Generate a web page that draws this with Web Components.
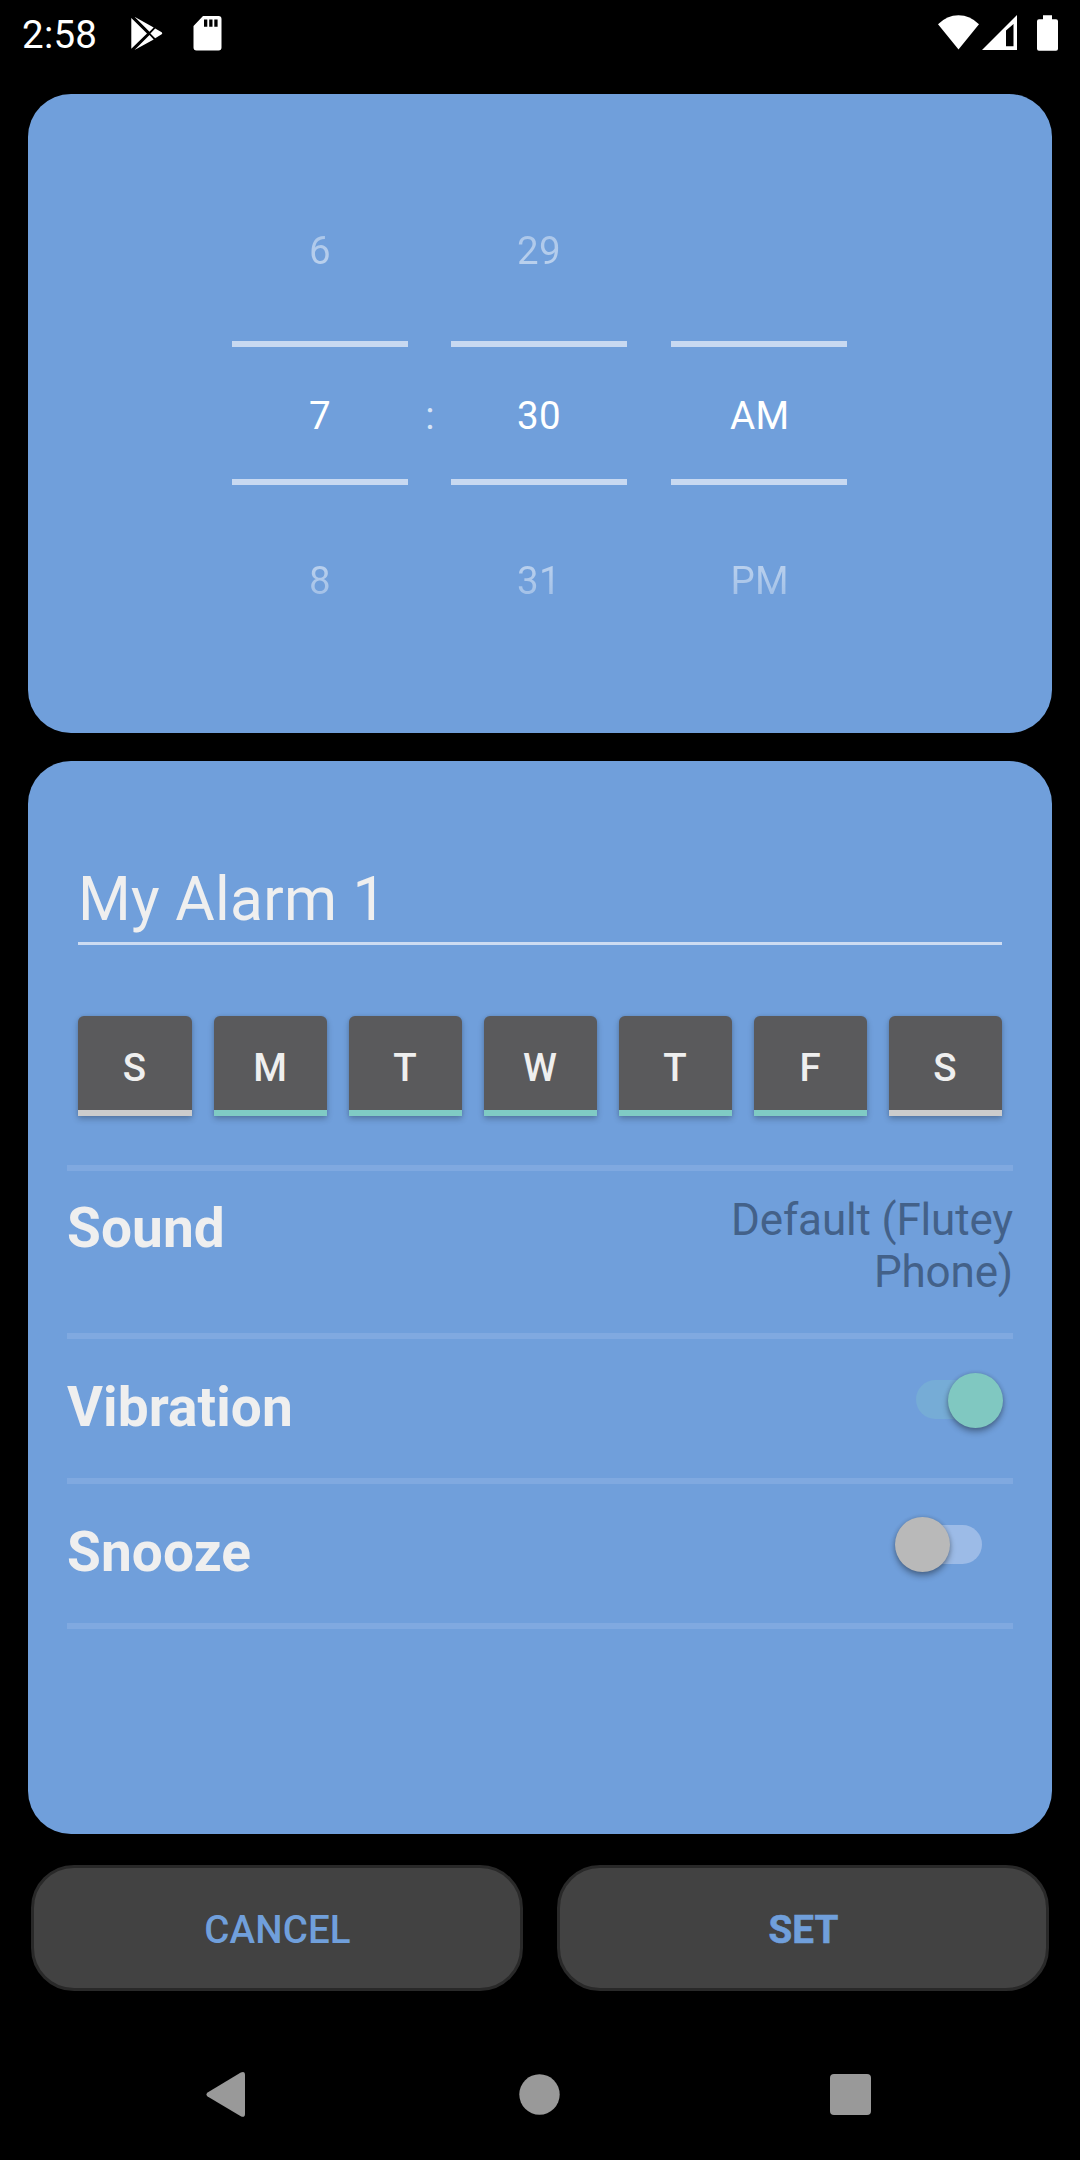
<!DOCTYPE html>
<html lang="en">
<head>
<meta charset="utf-8">
<title>Edit alarm</title>
<style>
html,body{margin:0;background:#000}
body{font-family:Roboto,"Liberation Sans",sans-serif}
</style>
</head>
<body>
<alarm-screen></alarm-screen>
<script>
function define(name, html, setup) {
  const tpl = document.createElement('template');
  tpl.innerHTML = html;
  customElements.define(name, class extends HTMLElement {
    connectedCallback() {
      if (this.shadowRoot) return;
      this.attachShadow({ mode: 'open' }).appendChild(tpl.content.cloneNode(true));
      if (setup) setup(this, this.shadowRoot);
    }
  });
}

define('status-bar', `
<style>
:host{display:flex;box-sizing:border-box;height:66px;padding:15px 22px 0 22px;align-items:flex-start;color:#fff}
.time{font-size:38.5px;line-height:39px;height:39px;width:109px;letter-spacing:.25px}
svg{display:block;flex:none}
.sd{margin-left:30px}
.wifi{margin-left:auto}
.sig{margin-left:3px}
.bat{margin-left:20px}
</style>
<span class="time"><slot></slot></span>
<svg width="32" height="36" viewBox="131 15 32 36" fill="#fff"><path d="M131.3 18v30.8L147 33.4zM134.5 16.7l15 15 4.2-4.3zM134.5 50l15-14.9 4.2 4.3zM155.2 28.5l6.5 3.8q1.2 1 0 2l-6.5 4-4.8-4.9z"/></svg>
<svg class="sd" width="29" height="36" viewBox="193 15 29 36" fill="#fff"><path fill-rule="evenodd" d="M203 16h15.5q3 0 3 3v28.5q0 3-3 3h-22q-3 0-3-3V26zM204 19.5v7.2h3.3v-7.2zM209.2 19.5v7.2h3.3v-7.2zM214.3 19.5v7.2h3.3v-7.2z"/></svg>
<svg class="wifi" width="41" height="36" viewBox="938 15 41 36" fill="#fff"><path d="M938 24.3Q947 15.3 958.500 15.300T979 24.300L958.500 49.500z"/></svg>
<svg class="sig" width="35" height="36" viewBox="982 15 35 36" fill="#fff"><path fill-rule="evenodd" d="M982 50L1017 15V50zM1006 30.500V46.300H1013.500V24z"/></svg>
<svg class="bat" width="21" height="36" viewBox="1037 15 21 36" fill="#fff"><path d="M1043 15.300h9v4h4q2 0 2 2v27.500q0 2-2 2h-17q-2 0-2-2v-27.500q0-2 2-2h4z"/></svg>`);

define('alarm-card', `
<style>
:host{display:flex;flex-direction:column;box-sizing:border-box;margin:0 28px;border-radius:43px;background:#709fdb}
</style><slot></slot>`);

define('picker-wheel', `
<style>
:host{display:flex;flex-direction:column;width:176px;text-align:center;font-size:38.5px;letter-spacing:.3px;color:#fff}
div{display:flex;align-items:center;justify-content:center;box-sizing:border-box;padding-left:var(--nudge,0)}
.prev,.next{padding-bottom:1px;color:transparent;-webkit-background-clip:text;background-clip:text}
.prev{height:180px;background-image:linear-gradient(#fff3,#fff6 38%,#fff8 60%,#fffa)}
.cur{height:132px;padding-top:5px}
.next{height:192px;background-image:linear-gradient(#fffa,#fff8 40%,#fff5 60%,#fff3)}
hr{border:0;margin:0;height:6px;background:#c8d9f1}
</style>
<div class="prev"></div><hr><div class="cur"></div><hr><div class="next"></div>`,
(el, root) => {
  for (const k of ['prev', 'cur', 'next']) root.querySelector('.' + k).textContent = el.getAttribute(k) || '';
});

define('time-picker', `
<style>
:host{display:flex;justify-content:flex-start;padding:67px 0 0 204px}
.colon{width:43px;box-sizing:border-box;padding:232px 0 0 1px;line-height:45px;text-align:center;font-size:38.5px;color:#d6e3f5}
.gap{width:44px}
.half{--nudge:1.5px}
</style>
<picker-wheel prev="6" cur="7" next="8"></picker-wheel>
<span class="colon">:</span>
<picker-wheel prev="29" cur="30" next="31"></picker-wheel>
<span class="gap"></span>
<picker-wheel class="half" cur="AM" next="PM"></picker-wheel>`);

define('name-field', `
<style>
:host{display:block;margin:103px 50px 0;box-sizing:border-box;height:81px;border-bottom:3px solid #cddcf2;font-size:60.500px;letter-spacing:.28px;line-height:71px;color:#efefef}
</style><slot></slot>`);

define('day-toggle', `
<style>
:host{display:flex;box-sizing:border-box;height:100px;border-bottom:6px solid #ccc;justify-content:center;align-items:center;padding:9px 1px 0 0;background:#5a5a5c;border-radius:6px 6px 0 0;font-size:38.5px;font-weight:500;color:#efefef;box-shadow:0 3px 6px rgba(0,0,0,.24),0 0 3px rgba(0,0,0,.1)}
:host([on]){border-bottom-color:#80cbc4}
</style><slot></slot>`);

define('day-row', `
<style>:host{display:grid;grid-template-columns:114px repeat(6,113px);gap:22px;margin:71px 50px 49px}</style>
<slot></slot>`);

define('setting-row', `
<style>
:host{display:flex;box-sizing:border-box;justify-content:space-between;align-items:flex-start;margin:0 39px;border-top:6px solid #80a9e0}
.label{font-size:55px;line-height:64px;font-weight:700;letter-spacing:.08px;color:#efefef;padding-top:var(--label-top,25px)}
</style>
<span class="label"></span><slot></slot>`,
(el, root) => { root.querySelector('.label').textContent = el.getAttribute('label'); });

define('sound-value', `
<style>:host{display:block;width:330px;padding-top:23px;text-align:right;font-size:44px;letter-spacing:-.16px;line-height:52px;color:#436189}</style>
<slot></slot>`);

define('toggle-switch', `
<style>
:host{display:flex;align-items:center;box-sizing:border-box;width:90px;height:55px;margin:33.5px 10px 0 0}
.track{flex:none;width:78px;height:39px;border-radius:20px;background:#76acd6;margin:0 0 1px 3px}
.thumb{flex:none;width:55px;height:55px;border-radius:50%;background:#80c8c1;margin-left:-46px;box-shadow:0 4px 6px rgba(0,0,0,.32),0 0 4px rgba(0,0,0,.16)}
:host([off]){justify-content:flex-end;margin:33px 31px 0 0}
:host([off]) .track{order:2;background:#9cbbe7;margin-left:-45.5px}
:host([off]) .thumb{order:1;background:#b9b9b9;margin-left:0;z-index:1}
</style>
<span class="track"></span><span class="thumb"></span>`);

define('action-button', `
<style>
:host{display:flex;flex:1 1 0;box-sizing:border-box;height:126px;border:3px solid #292929;border-radius:43px;background:#424242;align-items:center;justify-content:center;color:#709fdb;font-size:38.5px;font-weight:500;letter-spacing:.17px;padding:3px 0 0 1px}
:host([primary]){font-weight:700;-webkit-text-stroke:.6px #709fdb}
</style><slot></slot>`);

define('action-row', `
<style>:host{display:flex;gap:34px;margin:31px 31px 0}</style><slot></slot>`);

define('nav-bar', `
<style>
:host{display:flex;justify-content:space-between;align-items:center;padding:80px 209px 0 206px;height:46px}
svg{display:block}
.home{margin-left:3.5px}
</style>
<svg width="40" height="46" viewBox="206 2071 40 46" fill="#999"><path d="M207.600 2092.500L240.800 2072.600Q245 2070.800 245 2075V2114Q245 2118 240.800 2116.300L207.600 2096.400Q205.300 2094.500 207.600 2092.500z"/></svg>
<svg class="home" width="41" height="41" viewBox="0 0 41 41" fill="#999"><circle cx="20.500" cy="20.500" r="20.200"/></svg>
<svg width="41" height="41" viewBox="0 0 41 41" fill="#999"><rect width="41" height="41" rx="4"/></svg>`);

define('alarm-screen', `
<style>
:host{display:flex;flex-direction:column;width:1080px;height:2160px;overflow:hidden;background:#000}
.time{height:639px;margin-top:28px}
.form{height:1073px;margin-top:28px}
.sound{height:168px}
.vib,.snz{height:145px;--label-top:36px}
.end{height:6px;margin:0 39px;background:#80a9e0}
</style>
<status-bar>2:58</status-bar>
<alarm-card class="time"><time-picker></time-picker></alarm-card>
<alarm-card class="form">
  <name-field>My Alarm 1</name-field>
  <day-row>
    <day-toggle>S</day-toggle><day-toggle on>M</day-toggle><day-toggle on>T</day-toggle><day-toggle on>W</day-toggle><day-toggle on>T</day-toggle><day-toggle on>F</day-toggle><day-toggle>S</day-toggle>
  </day-row>
  <setting-row class="sound" label="Sound"><sound-value>Default (Flutey Phone)</sound-value></setting-row>
  <setting-row class="vib" label="Vibration"><toggle-switch></toggle-switch></setting-row>
  <setting-row class="snz" label="Snooze"><toggle-switch off></toggle-switch></setting-row>
  <div class="end"></div>
</alarm-card>
<action-row><action-button>CANCEL</action-button><action-button primary>SET</action-button></action-row>
<nav-bar></nav-bar>`);
</script>
</body>
</html>
